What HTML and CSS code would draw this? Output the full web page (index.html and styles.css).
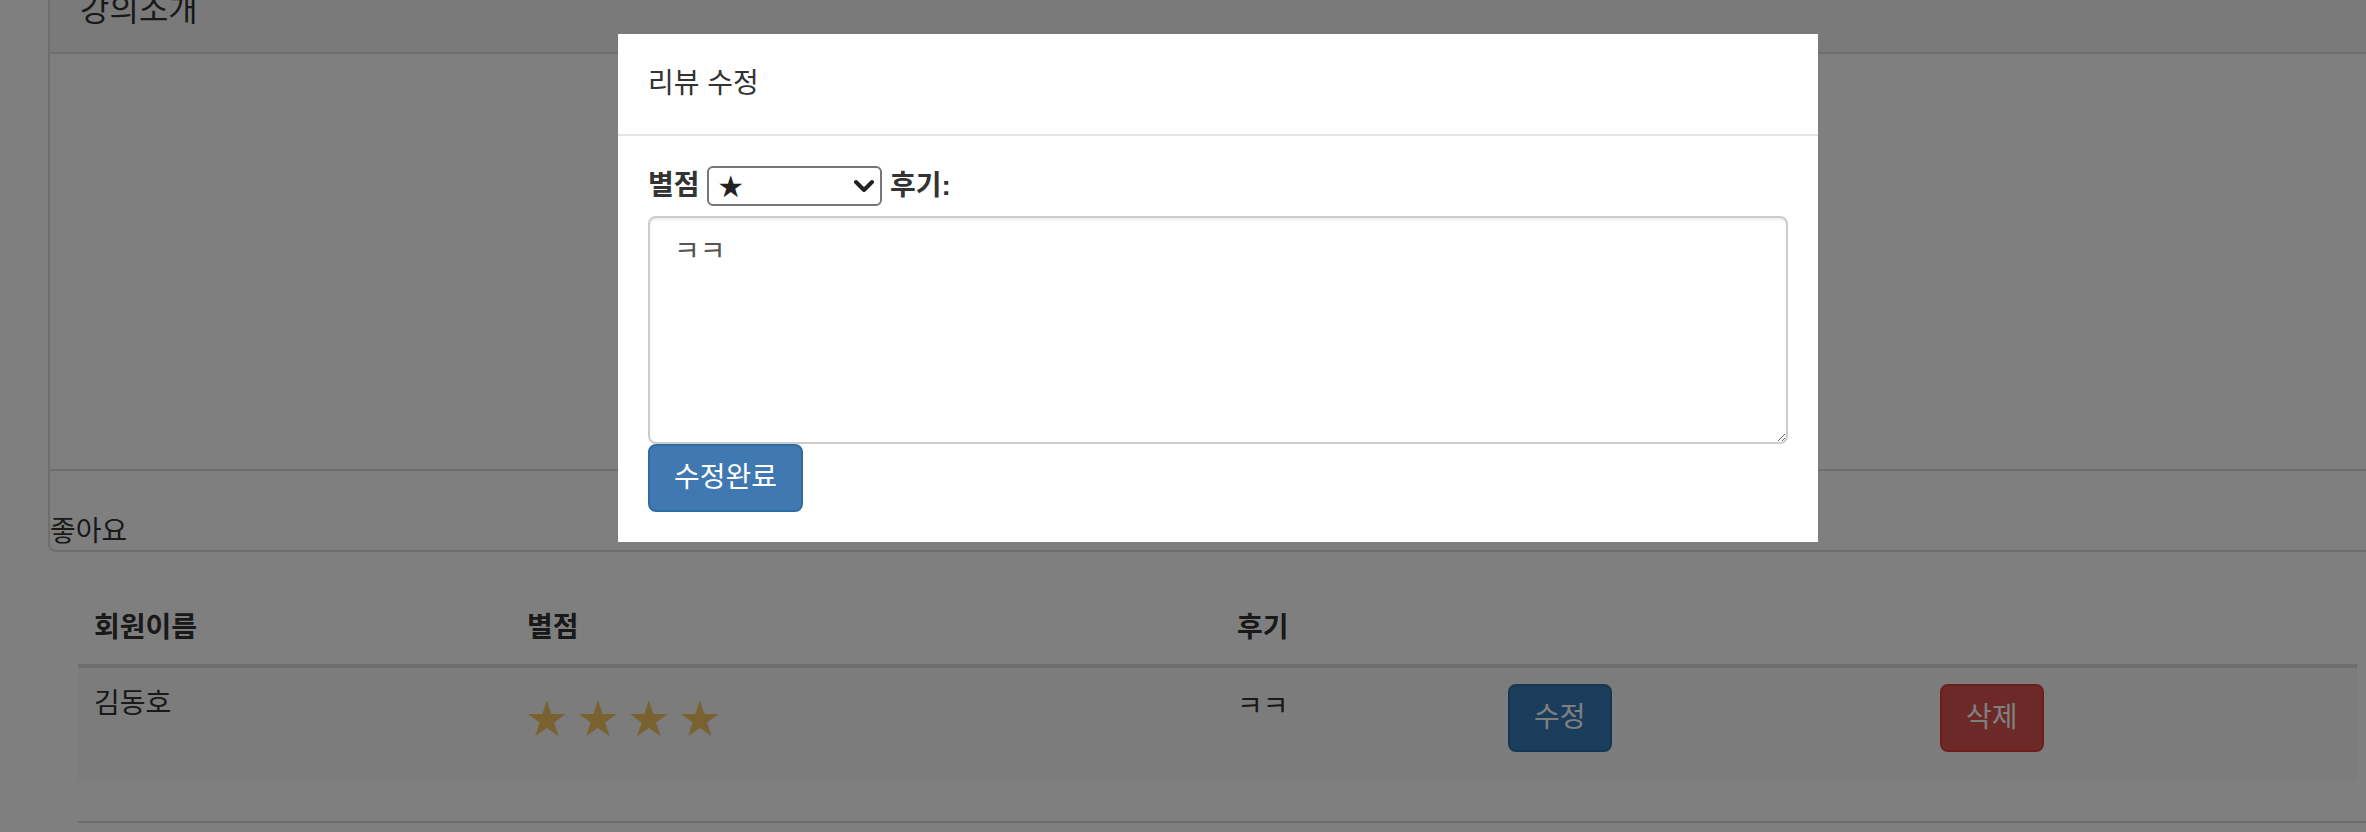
FILE: index.html
```html
<!DOCTYPE html>
<html lang="ko">
<head>
  <meta charset="UTF-8" />
  <meta name="viewport" content="width=device-width, initial-scale=1.0" />
  <title>강의 상세</title>
  <link rel="stylesheet" href="styles.css">
</head>
<body>
  <div class="page">
    <div class="panel">
      <div class="panel-heading">
        <h3 class="panel-title">강의소개</h3>
      </div>
      <div class="panel-body"></div>
      <div class="panel-like">좋아요</div>
    </div>

    <div class="reviews">
      <table class="review-table">
        <thead>
          <tr>
            <th class="col-name">회원이름</th>
            <th class="col-rating">별점</th>
            <th class="col-text">후기</th>
            <th class="col-edit"></th>
            <th class="col-delete"></th>
          </tr>
        </thead>
        <tbody>
          <tr>
            <td>김동호</td>
            <td><div class="stars">★ ★ ★ ★</div></td>
            <td class="review-text">ㅋㅋ</td>
            <td><button class="btn btn-primary">수정</button></td>
            <td><button class="btn btn-danger">삭제</button></td>
          </tr>
        </tbody>
      </table>
    </div>
    <div class="divider"></div>
  </div>

  <div class="modal-backdrop"></div>

  <div class="modal-dialog">
    <div class="modal-header">
      <div class="modal-title">리뷰 수정</div>
    </div>
    <div class="modal-body">
      <form>
        <div class="form-row">
          <label for="rating">별점</label>
          <span class="select-wrap">
            <select id="rating" class="rating-select">
              <option>★</option>
              <option>★★</option>
              <option>★★★</option>
              <option>★★★★</option>
              <option>★★★★★</option>
            </select>
            <svg class="select-arrow" width="22" height="14" viewBox="0 0 22 14">
              <path d="M3 3 L11 11 L19 3" fill="none" stroke="#222" stroke-width="4" stroke-linecap="round" stroke-linejoin="round"/>
            </svg>
          </span>
          <label for="content">후기:</label>
        </div>
        <textarea id="content" class="form-control" rows="5">ㅋㅋ</textarea>
        <div class="actions">
          <button type="button" class="btn btn-primary btn-submit">수정완료</button>
        </div>
      </form>
    </div>
  </div>
</body>
</html>
```

FILE: styles.css
```css
html, body {
  margin: 0;
  overflow: hidden;
  height: 100%;
}

body {
  font-family: "Liberation Sans", "Noto Sans CJK KR", sans-serif;
  font-size: 28px;
  line-height: 40px;
  color: #333;
  background-color: #fff;
}

.page {
  width: 2400px;
  padding-left: 48px;
  margin-top: -25px;
}

/* lecture panel */
.panel {
  border: 2px solid #ddd;
  border-radius: 8px;
  margin-bottom: 40px;
}

.panel-heading {
  background-color: #f5f5f5;
  border-bottom: 2px solid #ddd;
  padding: 16px 30px 24px;
}

.panel-title {
  margin: 0;
  font-size: 32px;
  line-height: 35px;
  font-weight: normal;
}

.panel-body {
  height: 415px;
  box-sizing: border-box;
  padding: 30px;
}

.panel-like {
  border-top: 2px solid #ddd;
  padding-top: 43px;
  line-height: 36px;
}

/* review table */
.reviews {
  width: 2279px;
  padding: 0 30px;
}

.review-table {
  width: 100%;
  border-collapse: collapse;
  margin-bottom: 40px;
}

.review-table th,
.review-table td {
  padding: 16px;
  text-align: left;
  vertical-align: top;
}

.review-table th {
  border-bottom: 4px solid #ddd;
  font-weight: bold;
}

.review-table tbody tr {
  background-color: #f9f9f9;
}

.review-table td.review-text {
  padding-top: 19px;
}

.col-name { width: 401px; }
.col-rating { width: 678px; }
.col-text { width: 239px; }
.col-edit { width: 400px; }

.stars {
  font-family: "Noto Sans CJK KR", sans-serif;
  font-size: 40px;
  line-height: 64px;
  word-spacing: 2px;
  color: #f2c45f;
  margin-bottom: 17px;
}

.divider {
  margin-left: 30px;
  border-top: 2px solid #ddd;
}

/* buttons */
.btn {
  font-family: inherit;
  font-size: 28px;
  line-height: 40px;
  padding: 12px 24px;
  border: 2px solid transparent;
  border-radius: 8px;
  color: #fff;
  cursor: pointer;
}

.btn-primary {
  background-color: #337ab7;
  border-color: #2e6da4;
}

.btn-danger {
  background-color: #d9534f;
  border-color: #d43f3a;
}

/* modal */
.modal-backdrop {
  position: fixed;
  inset: 0;
  background-color: rgba(0, 0, 0, 0.5);
}

.modal-dialog {
  position: absolute;
  left: 618px;
  top: 34px;
  width: 1200px;
  background-color: #fff;
}

.modal-header {
  padding: 30px;
  border-bottom: 2px solid #e5e5e5;
}

.modal-title {
  font-size: 28px;
  line-height: 40px;
}

.modal-body {
  padding: 30px;
}

.form-row label {
  display: inline-block;
  font-weight: bold;
  margin-bottom: 10px;
}

.select-wrap {
  position: relative;
  display: inline-block;
  vertical-align: top;
}

.rating-select {
  appearance: none;
  -webkit-appearance: none;
  width: 175px;
  height: 40px;
  box-sizing: border-box;
  border: 2px solid #767676;
  border-radius: 6px;
  background-color: #fff;
  padding: 0 0 0 8px;
  font-family: "DejaVu Sans", sans-serif;
  font-size: 30px;
  color: #222;
}

.select-arrow {
  position: absolute;
  right: 7px;
  top: 13px;
  pointer-events: none;
}

.form-control {
  display: block;
  width: 100%;
  box-sizing: border-box;
  padding: 14px 24px 10px;
  border: 2px solid #ccc;
  border-radius: 8px;
  box-shadow: inset 0 2px 2px rgba(0, 0, 0, 0.075);
  font-family: inherit;
  font-size: 28px;
  line-height: 40px;
  color: #555;
  margin: 0;
}

.actions {
  display: flex;
}

.btn-submit {
  background-color: #4078b2;
}
```
